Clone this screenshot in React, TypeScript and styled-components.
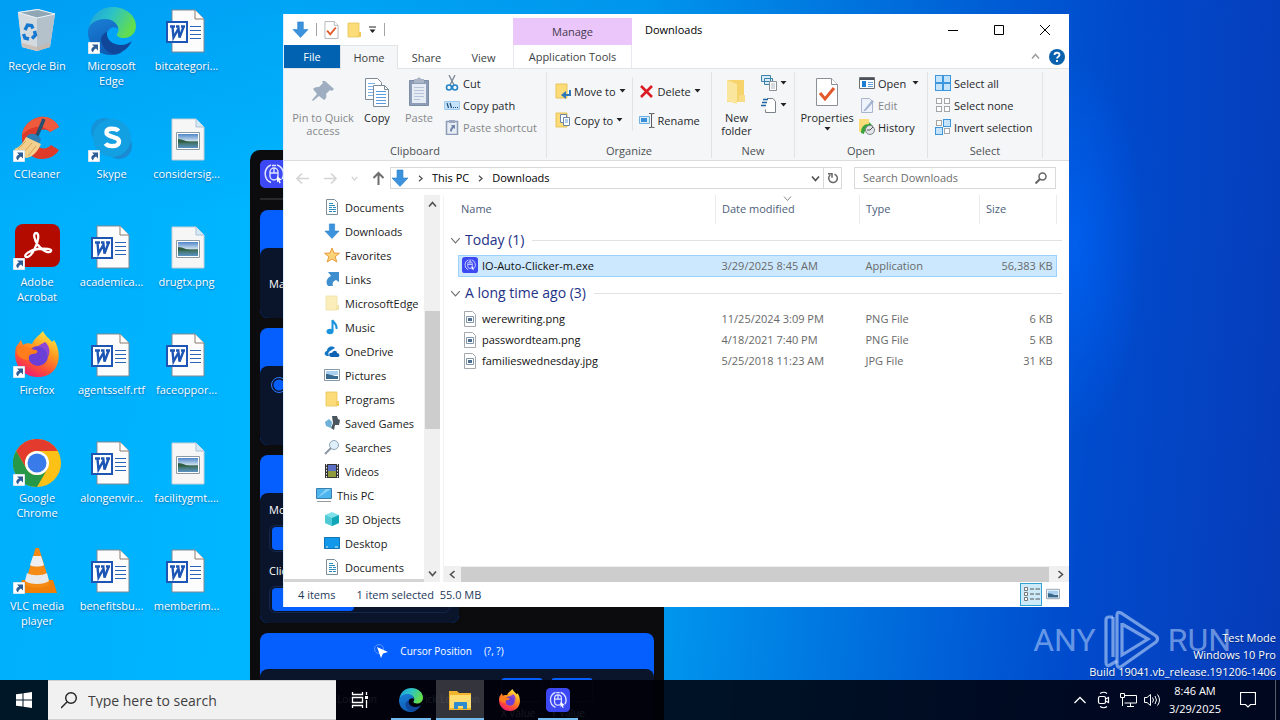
import React from 'react';
import styled, { createGlobalStyle, css } from 'styled-components';

const Global = createGlobalStyle`
  * { box-sizing: border-box; }
  html, body { margin: 0; padding: 0; }
  body { font-family: "Open Sans", "Noto Sans", sans-serif; font-size: 11px; line-height: 15px; color: #1b1b1b; }
  button, input { font: inherit; color: inherit; margin: 0; padding: 0; border: 0; background: none; }
  svg { display: block; flex: none; }
`;

/* ---------- Desktop ---------- */

const Screen = styled.div`
  position: relative;
  height: 100vh;
  overflow: hidden;
  display: grid;
  grid-template-rows: 1fr 40px;
  background:
    radial-gradient(ellipse 70px 190px at 84% 34%, rgba(0, 104, 255, 0.6), rgba(0, 90, 240, 0) 100%),
    linear-gradient(180deg, rgba(0, 60, 190, 0.14), rgba(0, 60, 190, 0) 30%),
    linear-gradient(95deg, #00aefc 0%, #00b6ff 22%, #00a4f4 48%, #0080e4 62%, #0062d8 74%, #004bcd 84%, #0443c2 92%, #063ab6 100%);
`;

const IconGrid = styled.main`
  display: grid;
  grid-template-columns: 74px 75px 75px;
  grid-template-rows: repeat(6, 108px);
  grid-auto-flow: column;
  align-content: start;
`;

const DesktopButton = styled.button`
  display: flex;
  flex-direction: column;
  align-items: center;
  gap: 3px;
  padding: 7px 0 0;
  color: #fff;
  line-height: 15px;
  text-shadow: 0 1px 2px rgba(0, 50, 110, 0.6);
`;

const DesktopLabel = styled.span`
  width: 72px;
`;

const Shortcut = () => (
  <g>
    <path d="M0.500 35.500h11v11h-11z" fill="#fff" stroke="#d8e6f0" />
    <path d="M4 37.500h6v6L8 41.500c-2 1-2.500 2-3 4C2 43 3.500 40.500 6 39.500z" fill="#2d5c96" />
  </g>
);

const WordDoc = () => (
  <svg width="48" height="48" viewBox="0 0 48 48">
    <path d="M9 3h23l9 9v33H9z" fill="#fcfcfc" stroke="#7f8a94" />
    <path d="M32 3v9h9" fill="#fff" stroke="#8a7a6a" />
    <path d="M27 19.500h11M27 23.500h11M27 27.500h11M27 31.500h11" stroke="#2a65b8" strokeWidth="1" />
    <path d="M4 15h20v20H4z" fill="#fff" stroke="#1d55b5" strokeWidth="2" />
    <path d="M7 19.500h5M13 19.500h3M18 19.500h4M9.500 20l1 10.500 5-9 1 9L20.500 20" fill="none" stroke="#1d55b5" strokeWidth="2.400" />
  </svg>
);

const PictureDoc = () => (
  <svg width="48" height="48" viewBox="0 0 48 48">
    <defs>
      <linearGradient id="sky" x1="0" y1="0" x2="0" y2="1">
        <stop offset="0" stopColor="#4f86c9" />
        <stop offset="0.500" stopColor="#cfe0ee" />
        <stop offset="0.550" stopColor="#3c6a52" />
        <stop offset="1" stopColor="#5b93c4" />
      </linearGradient>
    </defs>
    <path d="M9 4h24l8 8v33H9z" fill="#f6f6f6" stroke="#c9cfd4" />
    <path d="M33 4v8h8" fill="#d6e9f6" stroke="#a9c3d6" />
    <path d="M13.500 17.500h23v17h-23z" fill="#fff" stroke="#8c9aa6" />
    <path d="M15 19h20v14H15z" fill="url(#sky)" />
    <path d="M15 24c5 0 8 3 14 3.500H15z" fill="#2f5e45" />
  </svg>
);

const RecycleBin = () => (
  <svg width="48" height="48" viewBox="0 0 48 48">
    <path d="M5 5l20-3 17 5-5 33-13 4-15-4z" fill="#cdd9e2" />
    <path d="M5 6l19 5v33L9 40z" fill="#d3dae0" />
    <path d="M24 11l18-4-5 33-13 4z" fill="#b4c0ca" />
    <path d="M5 5.500l20-3L42 7l-18 4z" fill="#8fa6b5" stroke="#eef4f8" />
    <path d="M9 36l15 4 13-4-.5 4L24 44 9.500 40z" fill="#c9b6a6" opacity="0.700" />
    <path d="M12 23l2.500-5 4 .5 1.500 3M21.500 24l1 4-3.500 3.500M16 32l-4-1-1.500-4" fill="none" stroke="#1678cf" strokeWidth="3.400" />
  </svg>
);

const EdgeArt = ({ size, shortcut }: { size: number; shortcut?: boolean }) => (
  <svg width={size} height={size} viewBox="0 0 48 48">
    <defs>
      <linearGradient id="eg1" x1="0" y1="0" x2="1" y2="0.400">
        <stop offset="0" stopColor="#1b9de0" />
        <stop offset="0.500" stopColor="#2cc3c6" />
        <stop offset="1" stopColor="#62dd4e" />
      </linearGradient>
      <linearGradient id="eg2" x1="0" y1="0" x2="0.400" y2="1">
        <stop offset="0" stopColor="#1a80d8" />
        <stop offset="1" stopColor="#0f5cb4" />
      </linearGradient>
    </defs>
    <path d="M1 22C2 9 12 0 25 0c13 0 23 9 23 19 0 8-6 12-12 12-5 0-8-2-7-4 4-5 0-13-9-13C10 14 2 18 1 22z" fill="url(#eg1)" />
    <path d="M0 25c0-8 8-13 17-13 8 0 13 5 13 10-3-3-9-2-11 4-2 8 5 18 15 19-4 3-8 3-11 3C10 48 0 38 0 25z" fill="url(#eg2)" />
    <path d="M19 25c-1 8 6 13 14 13 5 0 8-2 11-4-4 8-11 13-19 13-7-2-12-9-12-14 0-4 3-7 6-8z" fill="#11479a" />
    {shortcut && <Shortcut />}
  </svg>
);

const CCleaner = () => (
  <svg width="48" height="48" viewBox="0 0 48 48">
    <path d="M46 12C41 3 33 1 27 2 16 4 8 13 9 24c1 12 9 20 20 20 8 0 14-4 17-9l-8-5c-5 6-15 4-16-5-1-8 8-14 15-8z" fill="#dd3a2a" />
    <path d="M46 12C41 3 33 1 27 2 17 4 10 11 9 20c6-7 20-13 28-3z" fill="#ee5a3c" />
    <path d="M31 4l-8 19" stroke="#26506f" strokeWidth="3.500" />
    <path d="M14 21c4-4 10-2 14 3l-2 5-13-5z" fill="#2f7db5" />
    <path d="M13 22l15 7c-3 7-8 13-15 14L1 34c6-2 9-6 12-12z" fill="#f2cf8d" />
    <path d="M5 34l8-8M10 38l9-10M15 41l8-10" stroke="#d7a653" />
    <Shortcut />
  </svg>
);

const Skype = () => (
  <svg width="48" height="48" viewBox="0 0 48 48">
    <circle cx="16" cy="16" r="13" fill="#1493d8" />
    <circle cx="31" cy="31" r="13" fill="#1a8ad2" />
    <circle cx="24" cy="23" r="19" fill="#13a0e2" />
    <path d="M30.500 16c-2-2.500-12-4-12 1.500 0 5.500 12.500 3 12.500 9s-11 5.500-13.500 2" fill="none" stroke="#fff" strokeWidth="4.400" />
    <Shortcut />
  </svg>
);

const Acrobat = () => (
  <svg width="48" height="48" viewBox="0 0 48 48">
    <rect x="2" y="1" width="45" height="43" rx="8" fill="#b30b00" />
    <path d="M23 10c4 0 2 9-1 15-3 7-7 10-9 9-3-2 4-7 12-8 8-1 14 0 13 2-1 3-9 0-13-6-4-5-5-12-2-12z" fill="none" stroke="#fff" strokeWidth="2.300" />
    <Shortcut />
  </svg>
);

const FirefoxArt = ({ size, shortcut }: { size: number; shortcut?: boolean }) => (
  <svg width={size} height={size} viewBox="0 0 48 48">
    <defs>
      <linearGradient id="ff1" x1="0.800" y1="0" x2="0.300" y2="1">
        <stop offset="0" stopColor="#fff04a" />
        <stop offset="0.400" stopColor="#ff9a1f" />
        <stop offset="0.750" stopColor="#ff4a3a" />
        <stop offset="1" stopColor="#e81a78" />
      </linearGradient>
    </defs>
    <path d="M30 0c2 5 6 7 9 11l2-2c9 13 6 37-16 37C9 46-1 32 3 16l5-7 2 5c3-2 6-2 9-1 3-7 7-8 11-13z" fill="url(#ff1)" />
    <circle cx="25" cy="25" r="10" fill="#6b3fd6" />
    <path d="M4 18c7-5 12 0 19 1 3 1 1 4-3 4-3 0-5 2-4 6-8 0-14-5-12-11z" fill="#ff7d1c" />
    <path d="M25 15c6 1 10 5 10 11 3-5 1-12-3-15z" fill="#8b45d8" />
    {shortcut && <Shortcut />}
  </svg>
);

const Chrome = () => (
  <svg width="48" height="48" viewBox="0 0 48 48">
    <circle cx="24" cy="24" r="24" fill="#fbc116" />
    <path d="M3.200 12A24 24 0 0 1 44.800 12H24a12 12 0 0 0-10.400 18z" fill="#e33b2e" />
    <path d="M3.200 12A24 24 0 0 0 24 48l10.400-18A12 12 0 0 1 13.600 30z" fill="#279847" />
    <circle cx="24" cy="24" r="12" fill="#fff" />
    <circle cx="24" cy="24" r="9.500" fill="#3a7bea" />
    <Shortcut />
  </svg>
);

const Vlc = () => (
  <svg width="48" height="48" viewBox="0 0 48 48">
    <path d="M9 33h31l4 13H5z" fill="#f08009" />
    <path d="M22.500 1h3.500l11 36c-4 5-21 5-25 0z" fill="#f58a14" />
    <path d="M20 9h8l3 9c-3 2-11 2-14 0z" fill="#efefef" />
    <path d="M14 26c5 3 15 3 20 0l2 8c-5 4-19 4-24 0z" fill="#e9e9e9" />
    <Shortcut />
  </svg>
);

const desktopItems: { label: string; icon: React.ReactNode }[] = [
  { label: 'Recycle Bin', icon: <RecycleBin /> },
  { label: 'CCleaner', icon: <CCleaner /> },
  { label: 'Adobe Acrobat', icon: <Acrobat /> },
  { label: 'Firefox', icon: <FirefoxArt size={48} shortcut /> },
  { label: 'Google Chrome', icon: <Chrome /> },
  { label: 'VLC media player', icon: <Vlc /> },
  { label: 'Microsoft Edge', icon: <EdgeArt size={48} shortcut /> },
  { label: 'Skype', icon: <Skype /> },
  { label: 'academica...', icon: <WordDoc /> },
  { label: 'agentsself.rtf', icon: <WordDoc /> },
  { label: 'alongenvir...', icon: <WordDoc /> },
  { label: 'benefitsbu...', icon: <WordDoc /> },
  { label: 'bitcategori...', icon: <WordDoc /> },
  { label: 'considersig...', icon: <PictureDoc /> },
  { label: 'drugtx.png', icon: <PictureDoc /> },
  { label: 'faceoppor...', icon: <WordDoc /> },
  { label: 'facilitygmt....', icon: <PictureDoc /> },
  { label: 'memberim...', icon: <WordDoc /> },
];

/* ---------- Watermark and build text ---------- */

const Watermark = styled.div`
  position: absolute;
  right: 49px;
  bottom: 50px;
  display: flex;
  align-items: center;
  gap: 8px;
  color: rgba(190, 215, 250, 0.55);
  font-family: "Roboto", "Liberation Sans", sans-serif;
  font-size: 32px;
  line-height: 60px;
`;

const BuildInfo = styled.div`
  position: absolute;
  right: 4px;
  bottom: 40px;
  color: #fff;
  text-align: right;
  line-height: 17px;
  text-shadow: 0 1px 1px rgba(0, 0, 0, 0.4);
`;

/* ---------- Clicker window ---------- */

const Clicker = styled.section`
  position: absolute;
  left: 250px;
  top: 150px;
  width: 414px;
  padding: 10px;
  border-radius: 10px;
  background: #0c0c0f;
  color: #fff;
  display: flex;
  flex-direction: column;
  gap: 10px;
`;

const ClickerTop = styled.header`
  height: 40px;
  border-bottom: 2px solid #29292c;
`;

const Card = styled.div<{ $wide?: boolean }>`
  width: ${(p) => (p.$wide ? '100%' : '199px')};
  border-radius: 8px;
  background: #055fff;
`;

const CardHead = styled.div<{ $titled?: boolean }>`
  height: ${(p) => (p.$titled ? 36 : 38)}px;
  display: flex;
  align-items: center;
  justify-content: center;
  gap: 12px;
  padding-right: 36px;
`;

const CardBody = styled.div<{ $h: number }>`
  height: ${(p) => p.$h}px;
  padding: 9px 9px;
  border-radius: 8px;
  background: #0a152b;
  display: flex;
  flex-direction: column;
  gap: 7px;
`;

const Toggle = styled.div`
  height: 27px;
  padding: 1px 2px;
  border: 1px solid #14264c;
  border-radius: 6px;
`;

const ToggleOn = styled.div`
  width: 82px;
  height: 23px;
  border-radius: 4px;
  background: #055fff;
`;

const SideText = styled.div`
  padding-top: 19px;
`;

const ToggleLabel = styled.span`
  padding-bottom: 1px;
  & + ${Toggle} + & { padding-top: 4px; }
`;

const ValueRow = styled.div`
  display: flex;
  align-items: flex-start;
  gap: 8px;
  padding-left: 68px;
  color: #a8adbb;
  font-size: 10px;
`;

const ValueText = styled.span`
  flex: none;
  width: 74px;
  padding-top: 14px;
`;

const ValueField = styled.label`
  display: grid;
  gap: 4px;
  width: 42px;
  white-space: nowrap;
`;

const ValueInput = styled.input`
  width: 42px;
  height: 24px;
  border: 1px solid #1a2d58;
  border-top: 2px solid #055fff;
  border-radius: 4px;
`;

const CursorTitle = styled.span`
  font-size: 10px;
`;

const AppLogo = ({ size }: { size: number }) => (
  <svg width={size} height={size} viewBox="0 0 28 28">
    <rect width="28" height="28" rx="5" fill="#3c48f4" />
    <path d="M11 22.500A9.500 9.500 0 0 1 11 5M17 5a9.500 9.500 0 0 1 5 14" fill="none" stroke="#dfe3ff" strokeWidth="1.500" />
    <rect x="10" y="8" width="8" height="12" rx="4" fill="none" stroke="#dfe3ff" strokeWidth="1.400" />
    <path d="M14 8v5M10 13h8M12 5.500h4" stroke="#dfe3ff" strokeWidth="1.400" />
    <path d="M17 16l5 4-2.500.3 1.200 2.500-1.200.6-1.200-2.500-1.300 1.600z" fill="#fff" />
  </svg>
);

/* ---------- Explorer window frame ---------- */

const Explorer = styled.section`
  position: absolute;
  left: 283px;
  right: 211px;
  top: 14px;
  bottom: 113px;
  display: flex;
  flex-direction: column;
  background: #fff;
  border-left: 1px solid #dceefb;
`;

const Header = styled.header`
  display: flex;
  height: 55px;
  border-bottom: 1px solid #e3e4e5;
`;

const HeaderLeft = styled.div`
  width: 229px;
`;

const QuickBar = styled.div`
  display: flex;
  align-items: center;
  gap: 7px;
  height: 31px;
  padding-left: 8px;
`;

const Divider = styled.span`
  width: 1px;
  height: 13px;
  background: #a5a5a5;
`;

const Tabs = styled.nav`
  display: flex;
  height: 24px;
`;

const Tab = styled.button<{ $kind?: 'file' | 'active' }>`
  width: 57px;
  height: 24px;
  color: #3b3f45;
  ${(p) => p.$kind === 'file' && css`width: 56px; height: 23px; background: #0062b1; color: #fff;`}
  ${(p) => p.$kind === 'active' && css`width: 58px; background: #f5f6f7; border: 1px solid #e3e4e5; border-bottom: 0;`}
`;

const Manage = styled.div`
  width: 119px;
  padding-top: 4px;
  text-align: center;
`;

const ManageTop = styled.div`
  height: 27px;
  line-height: 28px;
  background: #eac6fb;
  color: #46394d;
`;

const ManageTab = styled.button`
  width: 100%;
  height: 23px;
  border: solid #ece6f0;
  border-width: 0 1px;
  color: #3b3f45;
`;

const HeaderRight = styled.div`
  flex: 1;
`;

const TitleRow = styled.div`
  display: flex;
  align-items: center;
  height: 31px;
  padding: 0 1px 0 13px;
  color: #000;
`;

const TitleText = styled.h1`
  flex: 1;
  margin: 0;
  font-size: 11px;
  font-weight: 400;
`;

const WindowButton = styled.button`
  width: 46px;
  height: 31px;
  display: grid;
  place-items: center;
`;

const HelpRow = styled.div`
  display: flex;
  align-items: center;
  justify-content: flex-end;
  gap: 9px;
  height: 23px;
  padding-right: 4px;
`;

/* ---------- Ribbon ---------- */

const Ribbon = styled.div`
  display: flex;
  height: 92px;
  padding: 3px 0 2px;
  background: #f5f6f7;
  border-bottom: 1px solid #dcdddf;
`;

const Group = styled.section<{ $w: number }>`
  width: ${(p) => p.$w}px;
  display: flex;
  flex-direction: column;
  border-right: 1px solid #e1e3e5;
`;

const GroupBody = styled.div<{ $left: number }>`
  flex: 1;
  display: flex;
  padding-left: ${(p) => p.$left}px;
`;

const GroupName = styled.div`
  height: 15px;
  text-align: center;
  color: #4c5054;
  line-height: 16px;
`;

const BigButton = styled.button<{ $w: number; $off?: boolean }>`
  width: ${(p) => p.$w}px;
  height: 66px;
  padding-top: 4px;
  display: flex;
  flex-direction: column;
  align-items: center;
  gap: 3px;
  line-height: 13px;
  color: ${(p) => (p.$off ? '#85888c' : '#25282c')};
`;

const SmallCol = styled.div<{ $left?: number; $gap?: number }>`
  display: flex;
  flex-direction: column;
  padding-left: ${(p) => p.$left ?? 0}px;
  padding-top: ${(p) => (p.$gap ? 8 : 0)}px;
  gap: ${(p) => p.$gap ?? 0}px;
`;

const SmallButton = styled.button<{ $off?: boolean }>`
  display: flex;
  align-items: center;
  gap: 3px;
  height: 22px;
  white-space: nowrap;
  color: ${(p) => (p.$off ? '#85888c' : '#25282c')};
`;

const RibbonLine = styled.span`
  width: 1px;
  height: 54px;
  margin: 5px 6px 0;
  background: #e1e3e5;
`;

const Caret = () => (
  <svg width="7" height="4" viewBox="0 0 7 4"><path d="M0.500 0h6l-3 3.500z" fill="#222" /></svg>
);

const DownArrow = ({ size = 18 }: { size?: number }) => (
  <svg width={size} height={size} viewBox="0 0 18 18"><path d="M6 1h6v8h5l-8 8.500L1 9h5z" fill="#3a93dc" stroke="#2b7fc6" strokeWidth="0.600" /></svg>
);

const CheckPage = ({ w, h }: { w: number; h: number }) => (
  <svg width={w} height={h} viewBox="0 0 24 32">
    <path d="M1.500 2.500h15l6 6v21h-21z" fill="#fff" stroke="#8b9096" />
    <path d="M16.500 2.500v6h6" fill="#fff" stroke="#8b9096" />
    <path d="M5 17l5 6 9-11" fill="none" stroke="#e2592b" strokeWidth="3" />
  </svg>
);

const Folder = ({ pale }: { pale?: boolean }) => (
  <svg width="16" height="16" viewBox="0 0 16 16">
    <path d="M2 1h11v14H2z" fill={pale ? '#fbeebb' : '#fbdc79'} stroke={pale ? '#eedfa4' : '#e9c458'} strokeWidth="0.800" />
    <path d="M13 10h2v5h-3z" fill={pale ? '#f3e3a6' : '#f0c95a'} />
  </svg>
);

const PinIcon = () => (
  <svg width="32" height="32" viewBox="0 0 32 32"><path d="M18 5l9 8-2 2-2-1-4 4c1 3 0 5-2 6l-5-4-6 5-1-1 5-6-4-5c2-2 4-2 6-2l4-4-1-2z" fill="#9fadc0" /></svg>
);

const CopyIcon = () => (
  <svg width="32" height="32" viewBox="0 0 32 32">
    <path d="M4.500 2.500h12l4 4v17h-16z" fill="#fff" stroke="#7d8a98" />
    <path d="M7 7.500h7M7 10.500h10M7 13.500h5M7 16.500h5M7 19.500h5" stroke="#7cb0e6" />
    <path d="M12.500 9.500h11l4 4v17h-15z" fill="#fff" stroke="#7d8a98" />
    <path d="M23.500 9.500v4h4" fill="none" stroke="#7d8a98" />
    <path d="M15 15.500h10M15 18.500h10M15 21.500h10M15 24.500h10M15 27.500h10" stroke="#5a9be2" />
  </svg>
);

const PasteIcon = () => (
  <svg width="32" height="32" viewBox="0 0 32 32">
    <path d="M6.500 4.500h19v25h-19z" fill="#8c9db5" stroke="#7b8ca6" />
    <path d="M9 8h14v19H9z" fill="#e6ecf5" />
    <path d="M11 11.500h10M11 14.500h10M11 17.500h10M11 20.500h10M11 23.500h6" stroke="#b6c3d8" />
    <path d="M11 3h3c0-2 4-2 4 0h3v4H11z" fill="#a9b5c6" />
  </svg>
);

const NewFolderIcon = () => (
  <svg width="32" height="32" viewBox="0 0 32 32">
    <path d="M6 4h17v22H6z" fill="#f6d36b" /><path d="M6 4l10 4v20l-10-3z" fill="#fbe69d" />
    <path d="M18 19h6v7h-6z" fill="#f9dc86" />
  </svg>
);

const S16 = styled.svg.attrs({ width: 16, height: 16, viewBox: '0 0 16 16' })``;

const Squares = ({ on }: { on: boolean[] }) => (
  <S16>
    {on.map((v, i) => {
      const x = (i % 2) * 8 + 1;
      const y = Math.floor(i / 2) * 8 + 1;
      return <rect key={i} x={x + (v ? -0.5 : 0.5)} y={y + (v ? -0.5 : 0.5)} width={v ? 7 : 5} height={v ? 7 : 5} fill={v ? '#c5e3fb' : '#fff'} stroke={v ? '#3b96dd' : '#a5a5a5'} />;
    })}
  </S16>
);

/* ---------- Address row ---------- */

const AddressRow = styled.div`
  display: flex;
  align-items: center;
  height: 34px;
  padding: 0 13px 0 11px;
`;

const NavButtons = styled.div`
  display: flex;
  align-items: center;
  gap: 13px;
  width: 95px;
`;

const AddressBox = styled.div`
  flex: 1;
  display: flex;
  align-items: center;
  gap: 8px;
  height: 22px;
  border: 1px solid #d9d9d9;
  color: #000;
`;

const Crumb = styled.span`
  padding-bottom: 2px;
`;

const AddressEnd = styled.div`
  display: flex;
  align-items: center;
  gap: 3px;
`;

const Spacer = styled.span`
  flex: 1;
`;

const Refresh = styled.button`
  display: grid;
  place-items: center;
  width: 18px;
  height: 20px;
  border-left: 1px solid #d9d9d9;
`;

const SearchBox = styled.label`
  display: flex;
  align-items: center;
  width: 202px;
  height: 22px;
  margin-left: 12px;
  padding: 0 8px;
  border: 1px solid #d9d9d9;
`;

const SearchInput = styled.input`
  flex: 1;
  min-width: 0;
  padding-bottom: 2px;
  outline: 0;
  &::placeholder { color: #6d6d6d; opacity: 1; }
`;

const Chevron = ({ dir, color = '#505050', size = 9, thin }: { dir: 'up' | 'down' | 'left' | 'right'; color?: string; size?: number; thin?: boolean }) => {
  const d = { up: 'M1 6.500l3.500-4 3.500 4', down: 'M1 2.500l3.500 4 3.500-4', left: 'M6.500 1l-4 3.500 4 3.500', right: 'M2.500 1l4 3.500-4 3.500' }[dir];
  return <svg width={size} height={size} viewBox="0 0 9 9"><path d={d} fill="none" stroke={color} strokeWidth={thin ? 0.9 : 1.6} /></svg>;
};

const NavArrow = ({ dir }: { dir: 'left' | 'right' | 'up' }) => {
  const d = { left: 'M14 7.500H2M7 2.500l-5 5 5 5', right: 'M1 7.500h12M8 2.500l5 5-5 5', up: 'M7.500 14V2M2.500 7l5-5 5 5' }[dir];
  return <svg width="15" height="15" viewBox="0 0 15 15"><path d={d} fill="none" stroke={dir === 'up' ? '#6e6e6e' : '#d4d4d4'} strokeWidth={dir === 'up' ? 2 : 1.6} /></svg>;
};

/* ---------- Body ---------- */

const Body = styled.div`
  flex: 1;
  min-height: 0;
  display: flex;
`;

const Side = styled.aside`
  width: 140px;
  overflow: hidden;
  border-bottom: 3px solid #d4d4d4;
`;

const SideItem = styled.button<{ $root?: boolean }>`
  display: flex;
  align-items: center;
  gap: 5px;
  height: 24px;
  padding-left: ${(p) => (p.$root ? 32 : 40)}px;
  white-space: nowrap;
  color: #1a1a1a;
`;

const VBar = styled.div`
  display: flex;
  flex-direction: column;
  align-items: center;
  justify-content: space-between;
  width: 16px;
  padding: 5px 0 4px;
  background: #f0f0f0;
`;

const VThumb = styled.span`
  width: 15px;
  height: 31%;
  margin-bottom: 38px;
  background: #cdcdcd;
`;

const Files = styled.div`
  flex: 1;
  min-width: 0;
  margin-left: 3px;
  border-left: 1px solid #f3f3f3;
  display: flex;
  flex-direction: column;
`;

const TableWrap = styled.div`
  flex: 1;
  padding: 0 12px 0 14px;
`;

const Table = styled.table`
  width: 100%;
  table-layout: fixed;
  border-collapse: collapse;
`;

const HeadCell = styled.th<{ $w?: number }>`
  width: ${(p) => (p.$w ? p.$w + 'px' : 'auto')};
  height: 29px;
  padding: 0 3px 3px ${(p) => (p.$w ? 6 : 3)}px;
  font-weight: 400;
  text-align: left;
  color: #4c607a;
  border-right: 1px solid #ebebeb;
  position: relative;
`;

const SortMark = styled.span`
  position: absolute;
  top: -1px;
  left: 67px;
`;

const GroupCell = styled.th`
  height: 31px;
  padding: 1px 0 0;
  font-weight: 400;
  text-align: left;
`;

const GroupHeading = styled.div`
  display: flex;
  align-items: center;
  gap: 4px;
  margin: 0 -5px 0 -8px;
  font-size: 14px;
  line-height: 20px;
  color: #1e3287;
  &::after { content: ""; flex: 1; height: 1px; margin-left: 4px; background: #e2e2e2; }
`;

const Cell = styled.td<{ $right?: boolean }>`
  padding: 0 4px 0 6px;
  text-align: ${(p) => (p.$right ? 'right' : 'left')};
  color: #686868;
`;

const NameCell = styled.td`
  padding: 0 0 0 4px;
  color: #111;
`;

const FileRow = styled.tr<{ $selected?: boolean }>`
  height: ${(p) => (p.$selected ? 22 : 21)}px;
  ${(p) => p.$selected && css`
    background: #cce8ff;
    outline: 1px solid #99d1ff;
    outline-offset: -1px;
    & > td { padding-bottom: 2px; }
  `}
`;

const NameFlex = styled.div`
  display: flex;
  align-items: center;
  gap: 4px;
`;

const HBar = styled.div`
  display: flex;
  align-items: center;
  height: 16px;
  gap: 4px;
  padding: 0 4px;
  background: #f0f0f0;
`;

const HThumb = styled.span`
  flex: 1;
  height: 15px;
  margin-right: 3px;
  background: #cdcdcd;
`;

const Status = styled.footer`
  display: flex;
  align-items: center;
  height: 25px;
  padding: 0 5px 1px 14px;
  color: #1e395b;
`;

const StatusText = styled.span`
  margin-right: 21px;
`;

const ViewButton = styled.button<{ $on?: boolean }>`
  display: grid;
  place-items: center;
  width: 22px;
  height: 23px;
  ${(p) => p.$on && css`background: #cdeaf8; border: 1px solid #2fa2d4;`}
`;

/* ---------- Sidebar glyphs ---------- */

const DocGlyph = () => (
  <S16>
    <path d="M2.500.5h8l3 3v12h-11z" fill="#fff" stroke="#7e8e9b" />
    <path d="M5 4.500h4M5 6.500h6M5 8.500h3M9 8.500h3M5 10.500h7M5 12.500h3M9 12.500h3" stroke="#2d8bc0" />
  </S16>
);
const StarGlyph = () => (
  <S16><path d="M8 1l2 5 5.500.3-4.300 3.400L12.800 15 8 12l-4.800 3 1.600-5.300L.5 6.300 6 6z" fill="#fcd377" stroke="#e89a3c" /></S16>
);
const LinkGlyph = () => (
  <S16><path d="M4 1h11v10l-3-2c-3 1-4 3-3 6H4C1 11 3 7 7 5z" fill="#3f8fce" /></S16>
);
const MusicGlyph = () => (
  <S16><ellipse cx="6" cy="12.500" rx="3.500" ry="2.800" fill="#1b94dc" /><path d="M8.500 12V1c1 3 5 4 4 9" fill="none" stroke="#1b94dc" strokeWidth="2" /></S16>
);
const CloudGlyph = () => (
  <S16><path d="M1 12c-1-3 1-4 2-4 0-4 5-6 8-3L6 8c-2 1-2 3-1 5H3z" fill="#1276c4" /><path d="M7 14c-3-1-2-5 1-4 1-3 5-3 5 0 3 0 3 4 1 4z" fill="#0b63b4" /></S16>
);
const PictureGlyph = () => (
  <S16><path d="M.5 2.500h15v11H.5z" fill="#fff" stroke="#8797a4" /><path d="M2 4h12v4H2z" fill="#a9d0f0" /><path d="M2 7c4 0 6 2 12 2v3H2z" fill="#37688e" /></S16>
);
const GamesGlyph = () => (
  <S16><path d="M1 7l4-3 3 3-1 6-5-2z" fill="#6fb0d8" /><path d="M8 1h5l1 3 2 1-1 5h-4l-1 5-3-2 2-5z" fill="#4b555e" /></S16>
);
const LensGlyph = () => (
  <S16><circle cx="10" cy="6" r="4.500" fill="#dff0fb" stroke="#8fa7b8" /><path d="M7 9l-6 6" stroke="#8b98a3" strokeWidth="2" /></S16>
);
const FilmGlyph = () => (
  <S16><path d="M1 1h14v14H1z" fill="#333" /><path d="M4 2h8v6H4z" fill="#5b6fc4" /><path d="M4 8h8v6H4z" fill="#8f9a3c" /><path d="M2.500 1v14M13.500 1v14" stroke="#eee" strokeDasharray="1.500 1.500" /></S16>
);
const PcGlyph = () => (
  <S16><path d="M.5 1.500h15v10H.5z" fill="#4db5ee" stroke="#3a7fae" /><path d="M1 11l9-9h5z" fill="#8bd2f7" /><path d="M1 14.500h14" stroke="#9a9a9a" /></S16>
);
const CubeGlyph = () => (
  <S16><path d="M1 4l7-3 7 3v8l-7 3-7-3z" fill="#7fe0e8" /><path d="M8 7l7-3v8l-7 3z" fill="#10a6b8" /><path d="M1 4l7 3v8l-7-3z" fill="#4fc9d6" /></S16>
);
const DesktopGlyph = () => (
  <S16><path d="M.5 2.500h15v11H.5z" fill="#1298ea" stroke="#1273b6" /><path d="M2 12h2M11 12h3" stroke="#d7efff" /></S16>
);
const ImageFileGlyph = () => (
  <S16><path d="M2.500.5h8l3 3v12h-11z" fill="#fff" stroke="#a3a8ad" /><path d="M4.500 5.500h7v6h-7z" fill="#fff" stroke="#8296ab" /><path d="M6 7h4v3H6z" fill="#4e6f92" /></S16>
);

const sideItems: { label: string; icon: React.ReactNode; root?: boolean }[] = [
  { label: 'Documents', icon: <DocGlyph /> },
  { label: 'Downloads', icon: <DownArrow size={16} /> },
  { label: 'Favorites', icon: <StarGlyph /> },
  { label: 'Links', icon: <LinkGlyph /> },
  { label: 'MicrosoftEdge', icon: <Folder pale /> },
  { label: 'Music', icon: <MusicGlyph /> },
  { label: 'OneDrive', icon: <CloudGlyph /> },
  { label: 'Pictures', icon: <PictureGlyph /> },
  { label: 'Programs', icon: <Folder /> },
  { label: 'Saved Games', icon: <GamesGlyph /> },
  { label: 'Searches', icon: <LensGlyph /> },
  { label: 'Videos', icon: <FilmGlyph /> },
  { label: 'This PC', icon: <PcGlyph />, root: true },
  { label: '3D Objects', icon: <CubeGlyph /> },
  { label: 'Desktop', icon: <DesktopGlyph /> },
  { label: 'Documents', icon: <DocGlyph /> },
];

const oldFiles = [
  ['werewriting.png', '11/25/2024 3:09 PM', 'PNG File', '6 KB'],
  ['passwordteam.png', '4/18/2021 7:40 PM', 'PNG File', '5 KB'],
  ['familieswednesday.jpg', '5/25/2018 11:23 AM', 'JPG File', '31 KB'],
];

/* ---------- Taskbar ---------- */

const Taskbar = styled.footer`
  grid-row: 2;
  position: relative;
  display: flex;
  background: rgba(0, 0, 8, 0.87);
  color: #fff;
`;

const StartButton = styled.button`
  width: 48px;
  display: grid;
  place-items: center;
`;

const TaskSearch = styled.label`
  display: flex;
  align-items: center;
  gap: 11px;
  width: 288px;
  padding: 0 12px 0 13px;
  background: #f1f1f1;
  border: 1px solid #d0d0d0;
  border-width: 1px 0;
  color: #2b2b2b;
`;

const TaskSearchInput = styled.input`
  flex: 1;
  min-width: 0;
  font-size: 14px;
  outline: 0;
  &::placeholder { color: #3f3f3f; opacity: 1; }
`;

const TaskList = styled.div`
  flex: 1;
  display: flex;
  gap: 1px;
`;

const TaskButton = styled.button<{ $state?: 'open' | 'active' }>`
  width: 48px;
  display: grid;
  place-items: center;
  &:first-child { margin-right: 2px; }
  ${(p) => p.$state === 'open' && css`background: linear-gradient(#76b9ed, #76b9ed) center bottom / 40px 2px no-repeat;`}
  ${(p) => p.$state === 'active' && css`background: linear-gradient(#76b9ed, #76b9ed) center bottom / 48px 2px no-repeat, rgba(255, 255, 255, 0.2);`}
`;

const Tray = styled.div`
  display: flex;
  align-items: center;
`;

const TrayButton = styled.button`
  width: 24px;
  height: 40px;
  display: grid;
  place-items: center;
`;

const Clock = styled.button`
  width: 62px;
  line-height: 18px;
  padding-bottom: 1px;
`;

const Notify = styled.button`
  width: 50px;
  height: 40px;
  display: grid;
  place-items: center;
  padding-right: 6px;
  border-right: 1px solid #55606c;
  margin-right: 4px;
`;

export default function App() {
  return (
    <Screen>
      <Global />
      <IconGrid>
        {desktopItems.map((d) => (
          <DesktopButton key={d.label}>
            {d.icon}
            <DesktopLabel>{d.label}</DesktopLabel>
          </DesktopButton>
        ))}
      </IconGrid>

      <Watermark>
        <span>ANY</span>
        <svg width="56" height="60" viewBox="0 0 56 60" fill="none" stroke="rgba(190,215,250,0.6)" strokeWidth="3.200">
          <path d="M9 7H5q-3 0-3 3v42q0 5 4 3l7-4" />
          <path d="M9 7v40M13 14V5q0-4 4-2l35 23q3 3 0 6L18 56q-5 3-5-2V14" />
          <path d="M18 13v32l26-16-26-15" />
        </svg>
        <span>RUN</span>
      </Watermark>
      <BuildInfo>
        <div>Test Mode</div>
        <div>Windows 10 Pro</div>
        <div>Build 19041.vb_release.191206-1406</div>
      </BuildInfo>

      <Clicker aria-label="IO Auto Clicker">
        <ClickerTop><AppLogo size={28} /></ClickerTop>
        <Card>
          <CardHead />
          <CardBody $h={70}><SideText>Ma</SideText></CardBody>
        </Card>
        <Card>
          <CardHead />
          <CardBody $h={79}>
            <svg width="20" height="20" viewBox="0 0 20 20"><circle cx="10" cy="10" r="7.500" fill="none" stroke="#2d7bff" /><circle cx="10" cy="10" r="5.500" fill="#055fff" /></svg>
          </CardBody>
        </Card>
        <Card>
          <CardHead />
          <CardBody $h={130}>
            <ToggleLabel>Mouse</ToggleLabel>
            <Toggle><ToggleOn /></Toggle>
            <ToggleLabel>Click</ToggleLabel>
            <Toggle><ToggleOn /></Toggle>
          </CardBody>
        </Card>
        <Card $wide>
          <CardHead $titled>
            <svg width="14" height="16" viewBox="0 0 14 16"><circle cx="5" cy="6" r="4.500" fill="none" stroke="#5b93ff" /><path d="M3 4l11 5-5 1.500L7 15z" fill="#fff" /></svg>
            <CursorTitle>Cursor Position</CursorTitle>
            <CursorTitle>(?, ?)</CursorTitle>
          </CardHead>
          <CardBody $h={90}>
            <ValueRow>
              <ValueText>Location</ValueText>
              <ValueText>Pick Location</ValueText>
              <ValueField><ValueInput />X Value</ValueField>
              <ValueField><ValueInput />Y Value</ValueField>
            </ValueRow>
          </CardBody>
        </Card>
      </Clicker>

      <Explorer aria-label="Downloads">
        <Header>
          <HeaderLeft>
            <QuickBar>
              <DownArrow size={17} />
              <Divider />
              <CheckPage w={15} h={20} />
              <Folder />
              <svg width="8" height="8" viewBox="0 0 8 8"><path d="M0 1h7" stroke="#222" /><path d="M0.500 3.500h6l-3 3.500z" fill="#222" /></svg>
              <Divider />
            </QuickBar>
            <Tabs>
              <Tab $kind="file">File</Tab>
              <Tab $kind="active">Home</Tab>
              <Tab>Share</Tab>
              <Tab>View</Tab>
            </Tabs>
          </HeaderLeft>
          <Manage>
            <ManageTop>Manage</ManageTop>
            <ManageTab>Application Tools</ManageTab>
          </Manage>
          <HeaderRight>
            <TitleRow>
              <TitleText>Downloads</TitleText>
              <WindowButton aria-label="Minimize"><svg width="10" height="10"><path d="M0 5.500h10" stroke="#000" /></svg></WindowButton>
              <WindowButton aria-label="Maximize"><svg width="10" height="10"><path d="M.5.5h9v9h-9z" fill="none" stroke="#000" /></svg></WindowButton>
              <WindowButton aria-label="Close"><svg width="10" height="10"><path d="M0 0l10 10M10 0L0 10" stroke="#000" /></svg></WindowButton>
            </TitleRow>
            <HelpRow>
              <Chevron dir="up" color="#a0a0a0" />
              <svg width="16" height="16" viewBox="0 0 16 16"><circle cx="8" cy="8" r="8" fill="#0a62ae" /><path d="M5.500 6c0-3 5-3 5 0 0 1.500-2.500 1.800-2.500 3.500M8 11v2" fill="none" stroke="#fff" strokeWidth="1.800" /></svg>
            </HelpRow>
          </HeaderRight>
        </Header>

        <Ribbon>
          <Group $w={263}>
            <GroupBody $left={6}>
              <BigButton $w={66} $off><PinIcon />Pin to Quick access</BigButton>
              <BigButton $w={42}><CopyIcon />Copy</BigButton>
              <BigButton $w={42} $off><PasteIcon />Paste</BigButton>
              <SmallCol $left={4}>
                <SmallButton>
                  <S16><path d="M5 0l5 10M11 0L6 10" stroke="#7a8794" strokeWidth="1.300" /><circle cx="5" cy="12.500" r="2.500" fill="none" stroke="#2485c7" strokeWidth="1.600" /><circle cx="11" cy="12.500" r="2.500" fill="none" stroke="#2485c7" strokeWidth="1.600" /></S16>
                  Cut
                </SmallButton>
                <SmallButton>
                  <S16><path d="M0.500 4.500h15v8H0.500z" fill="#c5e2f8" stroke="#9fcaec" /><path d="M3 6l1.500 5M6 6l1.500 5" stroke="#1d4f80" strokeWidth="1.200" /><path d="M9 10.500h5" stroke="#1d4f80" strokeDasharray="1 1" /></S16>
                  Copy path
                </SmallButton>
                <SmallButton $off>
                  <S16><path d="M2.500 2.500h11v13h-11z" fill="#e8edf5" stroke="#8b9cb6" strokeWidth="1.500" /><path d="M5 1h6v3H5z" fill="#9aa9bf" /><path d="M7 6h4v4l-1.500-1c-1 1-1.500 2-1.500 3.500H6c0-2 .500-3.500 2-5z" fill="#7286a8" /></S16>
                  Paste shortcut
                </SmallButton>
              </SmallCol>
            </GroupBody>
            <GroupName>Clipboard</GroupName>
          </Group>
          <Group $w={165}>
            <GroupBody $left={8}>
              <SmallCol $gap={7}>
                <SmallButton>
                  <S16><path d="M1 1h11v14H1z" fill="#fbdc79" stroke="#e9c458" /><path d="M14 7v4h-3v-3l-5 4 5 4v-3h5V7z" fill="#2f77bd" /></S16>
                  Move to <Caret />
                </SmallButton>
                <SmallButton>
                  <S16><path d="M1 1h11v14H1z" fill="#fbdc79" stroke="#e9c458" /><path d="M5.500 2.500h6v8h-6z" fill="#fff" stroke="#6c87a6" /><path d="M8.500 5.500h6v8h-6z" fill="#fff" stroke="#6c87a6" /><path d="M10 8h3M10 10h3" stroke="#5a9be2" /></S16>
                  Copy to <Caret />
                </SmallButton>
              </SmallCol>
              <RibbonLine />
              <SmallCol $gap={7}>
                <SmallButton>
                  <S16><path d="M2 3l11 11M13 3L2 14" stroke="#dc1c24" strokeWidth="2.600" /></S16>
                  Delete <Caret />
                </SmallButton>
                <SmallButton>
                  <S16><path d="M.5 4.500h10v7H.5z" fill="#d9ecfb" stroke="#6fb0e2" /><path d="M2 6h6v4H2z" fill="#3b8fd6" /><path d="M12.500 2v13M10 1.500h2l1 .5 1-.5h1.500M10 15.500h2l1-.5 1 .5h1.500" fill="none" stroke="#5b5b5b" /></S16>
                  Rename
                </SmallButton>
              </SmallCol>
            </GroupBody>
            <GroupName>Organize</GroupName>
          </Group>
          <Group $w={83}>
            <GroupBody $left={3}>
              <BigButton $w={43}><NewFolderIcon />New folder</BigButton>
              <SmallCol $left={3}>
                <SmallButton aria-label="New item">
                  <S16><path d="M.5.5h9v6h-9zM3.500 3.500h8v6h-8z" fill="#d7ecfa" stroke="#3f82a8" /><path d="M8.500 6.500h7v9h-7z" fill="#fff" stroke="#8a8f94" /><path d="M10 9h4M10 11h4M10 13h4" stroke="#b0b5ba" /></S16>
                  <Caret />
                </SmallButton>
                <SmallButton aria-label="Easy access">
                  <S16><path d="M6 1.500h6l2.500 3v11H4.500v-3" fill="#fff" stroke="#7b8289" /><path d="M2 2.500h5M1 5.500h5M0 8.500h5" stroke="#1f66a4" strokeWidth="1.400" /></S16>
                  <Caret />
                </SmallButton>
              </SmallCol>
            </GroupBody>
            <GroupName>New</GroupName>
          </Group>
          <Group $w={133}>
            <GroupBody $left={4}>
              <BigButton $w={56}><CheckPage w={24} h={32} />Properties<Caret /></BigButton>
              <SmallCol $left={4}>
                <SmallButton>
                  <S16><path d="M.5 2.500h15v11H.5z" fill="#fff" stroke="#6b6f73" /><path d="M1 3h14v2H1z" fill="#4b5056" /><path d="M3 6h4v6H3z" fill="#1f7fd0" /><path d="M9 7.500h5M9 9.500h5M9 11.500h5" stroke="#6aa5dc" /></S16>
                  Open&nbsp; <Caret />
                </SmallButton>
                <SmallButton $off>
                  <S16><path d="M2.500 1.500h8l3 3v11h-11z" fill="#eef2fa" stroke="#a9b5cc" /><path d="M5 13l8-10 2 1.500-8 9-2.500 1z" fill="#a3b3d2" /></S16>
                  Edit
                </SmallButton>
                <SmallButton>
                  <S16><path d="M0 0h10v13H0z" fill="#fbdc79" /><path d="M2 14c0-6 3-9 8-9v-2l4 4-4 4V9c-3 0-4 2-5 6z" fill="#3ba23e" /><circle cx="11" cy="11" r="4.500" fill="#e3e6e8" stroke="#7c858c" /><path d="M11 11l3-3M11 11H8" stroke="#555" /></S16>
                  History
                </SmallButton>
              </SmallCol>
            </GroupBody>
            <GroupName>Open</GroupName>
          </Group>
          <Group $w={115}>
            <GroupBody $left={7}>
              <SmallCol>
                <SmallButton><Squares on={[true, true, true, true]} />Select all</SmallButton>
                <SmallButton><Squares on={[false, false, false, false]} />Select none</SmallButton>
                <SmallButton><Squares on={[false, true, true, false]} />Invert selection</SmallButton>
              </SmallCol>
            </GroupBody>
            <GroupName>Select</GroupName>
          </Group>
        </Ribbon>

        <AddressRow>
          <NavButtons>
            <NavArrow dir="left" />
            <NavArrow dir="right" />
            <Chevron dir="down" color="#d0d0d0" size={7} />
            <NavArrow dir="up" />
          </NavButtons>
          <AddressBox>
            <DownArrow />
            <Chevron dir="right" size={7} />
            <Crumb>This PC</Crumb>
            <Chevron dir="right" size={7} />
            <Crumb>Downloads</Crumb>
            <Spacer />
            <AddressEnd>
              <Chevron dir="down" />
              <Refresh aria-label="Refresh">
                <svg width="12" height="12" viewBox="0 0 12 12"><path d="M7.500 2.200A4.300 4.300 0 1 1 3.200 3M1 1.800h4v4" fill="none" stroke="#666" strokeWidth="1.500" /></svg>
              </Refresh>
            </AddressEnd>
          </AddressBox>
          <SearchBox>
            <SearchInput placeholder="Search Downloads" aria-label="Search Downloads" />
            <svg width="12" height="12" viewBox="0 0 12 12"><circle cx="7.500" cy="4.500" r="3.500" fill="none" stroke="#666" strokeWidth="1.500" /><path d="M5 7l-4.500 4.500" stroke="#666" strokeWidth="2" /></svg>
          </SearchBox>
        </AddressRow>

        <Body>
          <Side>
            {sideItems.map((s, i) => (
              <SideItem key={i} $root={s.root}>{s.icon}{s.label}</SideItem>
            ))}
          </Side>
          <VBar>
            <Chevron dir="up" />
            <VThumb />
            <Chevron dir="down" />
          </VBar>
          <Files>
            <TableWrap>
              <Table>
                <thead>
                  <tr>
                    <HeadCell>Name</HeadCell>
                    <HeadCell $w={144}>Date modified<SortMark><Chevron dir="down" color="#7a7a7a" thin /></SortMark></HeadCell>
                    <HeadCell $w={120}>Type</HeadCell>
                    <HeadCell $w={77}>Size</HeadCell>
                  </tr>
                </thead>
                <tbody>
                  <tr><GroupCell colSpan={4}><GroupHeading><Chevron dir="down" color="#707070" size={11} thin />Today (1)</GroupHeading></GroupCell></tr>
                  <FileRow $selected>
                    <NameCell><NameFlex><AppLogo size={16} />IO-Auto-Clicker-m.exe</NameFlex></NameCell>
                    <Cell>3/29/2025 8:45 AM</Cell>
                    <Cell>Application</Cell>
                    <Cell $right>56,383 KB</Cell>
                  </FileRow>
                  <tr><GroupCell colSpan={4}><GroupHeading><Chevron dir="down" color="#707070" size={11} thin />A long time ago (3)</GroupHeading></GroupCell></tr>
                  {oldFiles.map(([name, date, type, size]) => (
                    <FileRow key={name}>
                      <NameCell><NameFlex><ImageFileGlyph />{name}</NameFlex></NameCell>
                      <Cell>{date}</Cell>
                      <Cell>{type}</Cell>
                      <Cell $right>{size}</Cell>
                    </FileRow>
                  ))}
                </tbody>
              </Table>
            </TableWrap>
            <HBar>
              <Chevron dir="left" />
              <HThumb />
              <Chevron dir="right" />
            </HBar>
          </Files>
        </Body>
        <Status>
          <StatusText>4 items</StatusText>
          <span>1 item selected&nbsp; 55.0 MB</span>
          <Spacer />
          <ViewButton $on aria-label="Details">
            <svg width="17" height="14" viewBox="0 0 17 14"><path d="M1.500.5h3v3h-3zM1.500 5.500h3v3h-3zM1.500 10.500h3v3h-3z" fill="#fff" stroke="#777" /><path d="M7 2h4M12.500 2H17M7 7h4M12.500 7H17M7 12h4M12.500 12H17" stroke="#555" /></svg>
          </ViewButton>
          <ViewButton aria-label="Large icons"><svg width="14" height="12" viewBox="0 0 16 14"><path d="M.5 1.500h15v11H.5z" fill="#fff" stroke="#8797a4" /><path d="M2 3h12v4H2z" fill="#a9d0f0" /><path d="M2 6c4 0 6 2 12 2v3H2z" fill="#37688e" /></svg></ViewButton>
        </Status>
      </Explorer>

      <Taskbar>
        <StartButton aria-label="Start">
          <svg width="16" height="16" viewBox="0 0 16 16"><path d="M0 2.300L6.500 1.400v6.100H0zM7.500 1.200L16 0v7.500H7.500zM0 8.500h6.500v6.100L0 13.700zM7.500 8.500H16V16l-8.500-1.200z" fill="#fff" /></svg>
        </StartButton>
        <TaskSearch>
          <svg width="16" height="17" viewBox="0 0 16 17"><circle cx="10" cy="6" r="5.300" fill="none" stroke="#222" strokeWidth="1.400" /><path d="M6 10l-6 6" stroke="#222" strokeWidth="1.400" /></svg>
          <TaskSearchInput placeholder="Type here to search" aria-label="Type here to search" />
        </TaskSearch>
        <TaskList>
          <TaskButton aria-label="Task view">
            <svg width="18" height="16" viewBox="0 0 18 16"><path d="M1.500 0v2.500h10V0M1.500 5.500h10v5h-10zM1.500 16v-2.500h10V16M15.500 0v3M15.500 8v8" fill="none" stroke="#fff" strokeWidth="1.300" /><path d="M14 4h3v3h-3z" fill="#fff" /></svg>
          </TaskButton>
          <TaskButton $state="open" aria-label="Microsoft Edge"><EdgeArt size={24} /></TaskButton>
          <TaskButton $state="active" aria-label="File Explorer">
            <svg width="22" height="20" viewBox="0 0 22 20"><path d="M0 1h8l2 2h12v17H0z" fill="#f0b52c" /><path d="M1 5h21v13H1z" fill="#fddc72" /><path d="M5 19v-6q0-1 1-1h11q1 0 1 1v6h-4v-3H9v3z" fill="#2e8bd0" /></svg>
          </TaskButton>
          <TaskButton aria-label="Firefox"><FirefoxArt size={23} /></TaskButton>
          <TaskButton $state="open" aria-label="IO Auto Clicker"><AppLogo size={24} /></TaskButton>
        </TaskList>
        <Tray>
          <TrayButton aria-label="Show hidden icons"><svg width="12" height="8"><path d="M.5 7l5.500-5.500L11.500 7" fill="none" stroke="#fff" strokeWidth="1.300" /></svg></TrayButton>
          <TrayButton aria-label="Meet now"><svg width="14" height="18" viewBox="0 0 14 18"><rect x="1.500" y="5.500" width="7" height="7" rx="1.500" fill="none" stroke="#fff" strokeWidth="1.200" /><path d="M8.500 8l3-1.500v5L8.500 10M3 2.500q4-2.500 7 0M3 15.500q4 2.500 7 0" fill="none" stroke="#fff" strokeWidth="1.200" /></svg></TrayButton>
          <TrayButton aria-label="Network"><svg width="17" height="14" viewBox="0 0 17 14"><path d="M5 2.500h11.500v7.500H4.500M.5.500h4v4h-4zM2.500 4.500v8.500M7 13.500h7M10.500 10v3.500" fill="none" stroke="#fff" /></svg></TrayButton>
          <TrayButton aria-label="Volume"><svg width="17" height="14" viewBox="0 0 17 14"><path d="M.5 4.500h2.500l3.500-3v11l-3.500-3H.5zM8.500 4.500q2 2.500 0 5M11 3q3 4 0 8M13.500 1.500q4 5.500 0 11" fill="none" stroke="#fff" /></svg></TrayButton>
          <Clock><div>8:46 AM</div><div>3/29/2025</div></Clock>
          <Notify aria-label="Notifications"><svg width="16" height="16" viewBox="0 0 16 16"><path d="M.5.500h15v12h-5L8 15l-2.500-2.500h-5z" fill="none" stroke="#fff" strokeWidth="1.200" /></svg></Notify>
        </Tray>
      </Taskbar>
    </Screen>
  );
}
